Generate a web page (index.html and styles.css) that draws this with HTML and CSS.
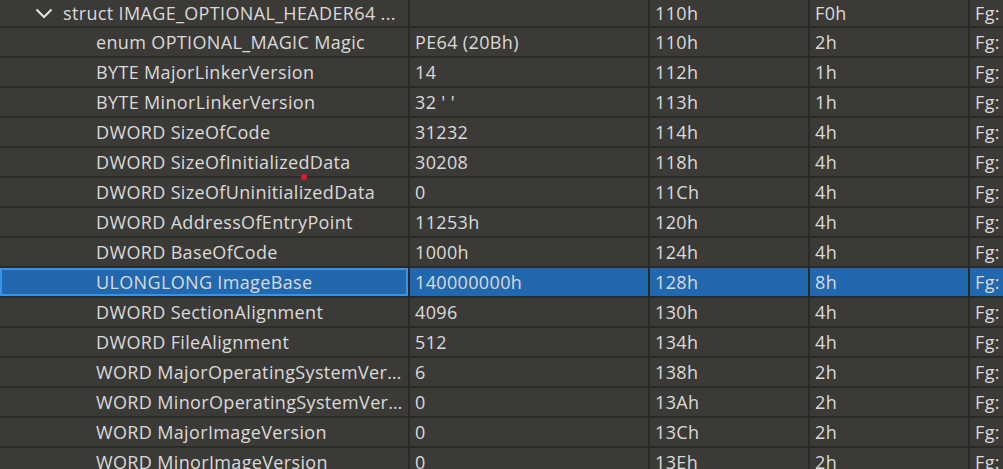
FILE: index.html
```html
<!DOCTYPE html>
<html>
<head>
<meta charset="utf-8">
<link rel="stylesheet" href="styles.css">
</head>
<body>
<div class="table">
  <div class="cell name struct"><svg class="chev" width="18" height="12" viewBox="0 0 18 12"><path d="M1.5 2.5 L9 10 L16.5 2.5" fill="none" stroke="#e6e6e6" stroke-width="2"/></svg><span class="txt">struct IMAGE_OPTIONAL_HEADER64 ...</span></div>
  <div class="cell"></div><div class="cell">110h</div><div class="cell">F0h</div><div class="cell">Fg:</div>

  <div class="cell name"><span class="txt">enum OPTIONAL_MAGIC Magic</span></div>
  <div class="cell">PE64 (20Bh)</div><div class="cell">110h</div><div class="cell">2h</div><div class="cell">Fg:</div>

  <div class="cell name"><span class="txt">BYTE MajorLinkerVersion</span></div>
  <div class="cell">14</div><div class="cell">112h</div><div class="cell">1h</div><div class="cell">Fg:</div>

  <div class="cell name"><span class="txt">BYTE MinorLinkerVersion</span></div>
  <div class="cell">32 ' '</div><div class="cell">113h</div><div class="cell">1h</div><div class="cell">Fg:</div>

  <div class="cell name"><span class="txt">DWORD SizeOfCode</span></div>
  <div class="cell">31232</div><div class="cell">114h</div><div class="cell">4h</div><div class="cell">Fg:</div>

  <div class="cell name"><span class="txt">DWORD SizeOfInitializedData</span></div>
  <div class="cell">30208</div><div class="cell">118h</div><div class="cell">4h</div><div class="cell">Fg:</div>

  <div class="cell name"><span class="txt">DWORD SizeOfUninitializedData</span></div>
  <div class="cell">0</div><div class="cell">11Ch</div><div class="cell">4h</div><div class="cell">Fg:</div>

  <div class="cell name"><span class="txt">DWORD AddressOfEntryPoint</span></div>
  <div class="cell">11253h</div><div class="cell">120h</div><div class="cell">4h</div><div class="cell">Fg:</div>

  <div class="cell name"><span class="txt">DWORD BaseOfCode</span></div>
  <div class="cell">1000h</div><div class="cell">124h</div><div class="cell">4h</div><div class="cell">Fg:</div>

  <div class="cell name sel focus"><span class="txt">ULONGLONG ImageBase</span></div>
  <div class="cell sel">140000000h</div><div class="cell sel">128h</div><div class="cell sel">8h</div><div class="cell sel">Fg:</div>

  <div class="cell name"><span class="txt">DWORD SectionAlignment</span></div>
  <div class="cell">4096</div><div class="cell">130h</div><div class="cell">4h</div><div class="cell">Fg:</div>

  <div class="cell name"><span class="txt">DWORD FileAlignment</span></div>
  <div class="cell">512</div><div class="cell">134h</div><div class="cell">4h</div><div class="cell">Fg:</div>

  <div class="cell name"><span class="txt">WORD MajorOperatingSystemVersion</span></div>
  <div class="cell">6</div><div class="cell">138h</div><div class="cell">2h</div><div class="cell">Fg:</div>

  <div class="cell name"><span class="txt">WORD MinorOperatingSystemVersion</span></div>
  <div class="cell">0</div><div class="cell">13Ah</div><div class="cell">2h</div><div class="cell">Fg:</div>

  <div class="cell name"><span class="txt">WORD MajorImageVersion</span></div>
  <div class="cell">0</div><div class="cell">13Ch</div><div class="cell">2h</div><div class="cell">Fg:</div>

  <div class="cell name"><span class="txt">WORD MinorImageVersion</span></div>
  <div class="cell">0</div><div class="cell">13Eh</div><div class="cell">2h</div><div class="cell">Fg:</div>

  <span class="dot"></span>
</div>
</body>
</html>
```
FILE: styles.css
```css
html, body {
  margin: 0;
  padding: 0;
  background: #2b2a28;
  overflow: hidden;
  width: 1003px;
  height: 469px;
}
.table {
  position: relative;
  display: grid;
  grid-template-columns: 408px 238px 158px 158px 200px;
  grid-template-rows: 26px repeat(15, 28px);
  gap: 2px;
  background: #2b2a28;
  font-family: "Open Sans", "Noto Sans", sans-serif;
  font-size: 18px;
  letter-spacing: 0.35px;
  color: #dadada;
}
.cell {
  background: #3c3a37;
  display: flex;
  align-items: center;
  padding-left: 5px;
  white-space: nowrap;
  overflow: hidden;
  min-width: 0;
}
.name {
  padding-left: 96px;
}
.name .txt {
  overflow: hidden;
  text-overflow: ellipsis;
  white-space: nowrap;
  min-width: 0;
}
.struct {
  padding-left: 35px;
}
.chev {
  flex: none;
  margin-right: 10px;
}
.sel {
  background: #2268ae;
}
.focus {
  box-shadow: inset 0 0 0 2px #3a92e6;
}
.dot {
  position: absolute;
  left: 301px;
  top: 174px;
  width: 6px;
  height: 6px;
  border-radius: 50%;
  background: #e0162b;
}
```
